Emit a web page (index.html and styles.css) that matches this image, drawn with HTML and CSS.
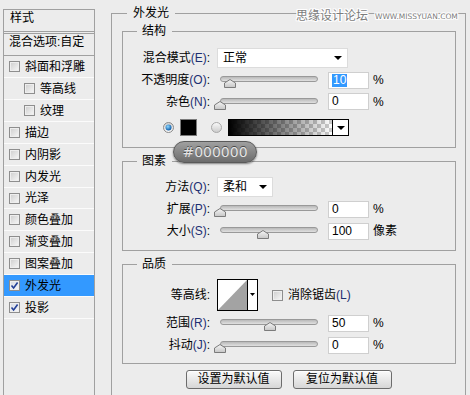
FILE: index.html
```html
<!DOCTYPE html>
<html lang="zh-CN">
<head>
<meta charset="utf-8">
<title>外发光</title>
<link rel="stylesheet" href="styles.css">
</head>
<body>
<svg class="defs" width="0" height="0" aria-hidden="true">
  <defs>
    <linearGradient id="tg" x1="0" y1="0" x2="0" y2="1"><stop offset="0" stop-color="#f6f6f6"/><stop offset="1" stop-color="#c6c6c6"/></linearGradient>
    <linearGradient id="rg" x1="0" y1="0" x2="0" y2="1"><stop offset="0" stop-color="#cfcfcf"/><stop offset="1" stop-color="#fbfbfb"/></linearGradient>
    <linearGradient id="rg2" x1="0" y1="0" x2="0" y2="1"><stop offset="0" stop-color="#fafafa"/><stop offset="1" stop-color="#cacaca"/></linearGradient>
    <radialGradient id="rb" cx="40%" cy="35%" r="65%"><stop offset="0" stop-color="#8fd8ff"/><stop offset="1" stop-color="#0a5aa8"/></radialGradient>
  </defs>
</svg>
<div class="dialog">
  <aside class="styles-panel">
    <div class="phead">样式</div>
    <div class="blend">混合选项:自定</div>
    <ul class="items">
      <li class="item"><span class="cb"></span>斜面和浮雕</li>
      <li class="item sub"><span class="cb"></span>等高线</li>
      <li class="item sub"><span class="cb"></span>纹理</li>
      <li class="item"><span class="cb"></span>描边</li>
      <li class="item"><span class="cb"></span>内阴影</li>
      <li class="item"><span class="cb"></span>内发光</li>
      <li class="item short"><span class="cb"></span>光泽</li>
      <li class="item"><span class="cb"></span>颜色叠加</li>
      <li class="item"><span class="cb"></span>渐变叠加</li>
      <li class="item"><span class="cb"></span>图案叠加</li>
      <li class="item sel"><span class="cb on"><svg width="9" height="9" viewBox="0 0 9 9"><path d="M1.5 4.5 L3.6 7 L7.6 1.5" fill="none" stroke="#223f96" stroke-width="1.6"/></svg></span>外发光</li>
      <li class="item"><span class="cb on"><svg width="9" height="9" viewBox="0 0 9 9"><path d="M1.5 4.5 L3.6 7 L7.6 1.5" fill="none" stroke="#223f96" stroke-width="1.6"/></svg></span>投影</li>
    </ul>
  </aside>

  <main class="group outer">
    <div class="legend lg-outer">外发光</div>

    <section class="group inner s1">
      <div class="legend lg-inner">结构</div>
      <div class="row r-first">
        <span class="lbl">混合模式<span class="k">(E)</span>:</span>
        <div class="select sel-blend"><span>正常</span><i class="arrow"></i></div>
      </div>
      <div class="row">
        <span class="lbl">不透明度<span class="k">(O)</span>:</span>
        <div class="slider"><div class="track"></div><svg class="thumb" style="left:7px" width="12" height="9" viewBox="0 0 12 9"><path d="M6 0.5 L11.5 4 V8.5 H0.5 V4 Z" fill="url(#tg)" stroke="#7b7b7b"/></svg></div>
        <div class="num"><span class="hl">10</span></div><span class="unit">%</span>
      </div>
      <div class="row h21">
        <span class="lbl">杂色<span class="k">(N)</span>:</span>
        <div class="slider"><div class="track"></div><svg class="thumb" style="left:-3px" width="12" height="9" viewBox="0 0 12 9"><path d="M6 0.5 L11.5 4 V8.5 H0.5 V4 Z" fill="url(#tg)" stroke="#7b7b7b"/></svg></div>
        <div class="num">0</div><span class="unit">%</span>
      </div>
      <div class="row h21 colorrow">
        <svg class="radio" width="11" height="11" viewBox="0 0 11 11"><circle cx="5.5" cy="5.5" r="5" fill="url(#rg)" stroke="#8a8a8a"/><circle cx="5.5" cy="5.5" r="3" fill="url(#rb)"/></svg>
        <div class="swatch"></div>
        <svg class="radio r2" width="11" height="11" viewBox="0 0 11 11"><circle cx="5.5" cy="5.5" r="5" fill="url(#rg2)" stroke="#a8a8a8"/></svg>
        <div class="gradient"><div class="gfill"></div><div class="garrow"><i class="arrow"></i></div></div>
      </div>
    </section>

    <section class="group inner s2">
      <div class="legend lg-inner">图素</div>
      <div class="row r-first">
        <span class="lbl">方法<span class="k">(Q)</span>:</span>
        <div class="select sel-method"><span>柔和</span><i class="arrow"></i></div>
      </div>
      <div class="row">
        <span class="lbl">扩展<span class="k">(P)</span>:</span>
        <div class="slider"><div class="track"></div><svg class="thumb" style="left:-3px" width="12" height="9" viewBox="0 0 12 9"><path d="M6 0.5 L11.5 4 V8.5 H0.5 V4 Z" fill="url(#tg)" stroke="#7b7b7b"/></svg></div>
        <div class="num">0</div><span class="unit">%</span>
      </div>
      <div class="row">
        <span class="lbl">大小<span class="k">(S)</span>:</span>
        <div class="slider"><div class="track"></div><svg class="thumb" style="left:40px" width="12" height="9" viewBox="0 0 12 9"><path d="M6 0.5 L11.5 4 V8.5 H0.5 V4 Z" fill="url(#tg)" stroke="#7b7b7b"/></svg></div>
        <div class="num">100</div><span class="unit">像素</span>
      </div>
    </section>

    <section class="group inner s3">
      <div class="legend lg-inner">品质</div>
      <div class="row r-first contour-row">
        <span class="lbl">等高线:</span>
        <svg class="contour" width="41" height="32" viewBox="0 0 41 32"><rect x="0.5" y="0.5" width="40" height="31" fill="#fff" stroke="#000"/><polygon points="1,31 30,1 30,31" fill="#a3a3a3"/><line x1="30.5" y1="0" x2="30.5" y2="32" stroke="#000"/><polygon points="33,14 38,14 35.5,17" fill="#000"/></svg>
        <span class="cb aa"></span><span class="aa-lbl">消除锯齿<span class="k">(L)</span></span>
      </div>
      <div class="row r-range">
        <span class="lbl">范围<span class="k">(R)</span>:</span>
        <div class="slider"><div class="track"></div><svg class="thumb" style="left:47px" width="12" height="9" viewBox="0 0 12 9"><path d="M6 0.5 L11.5 4 V8.5 H0.5 V4 Z" fill="url(#tg)" stroke="#7b7b7b"/></svg></div>
        <div class="num">50</div><span class="unit">%</span>
      </div>
      <div class="row">
        <span class="lbl">抖动<span class="k">(J)</span>:</span>
        <div class="slider"><div class="track"></div><svg class="thumb" style="left:-3px" width="12" height="9" viewBox="0 0 12 9"><path d="M6 0.5 L11.5 4 V8.5 H0.5 V4 Z" fill="url(#tg)" stroke="#7b7b7b"/></svg></div>
        <div class="num">0</div><span class="unit">%</span>
      </div>
    </section>

    <div class="btns">
      <button class="btn b1">设置为默认值</button>
      <button class="btn b2">复位为默认值</button>
    </div>
  </main>
</div>

<div class="tooltip">#000000</div>
<div class="watermark">思缘设计论坛<span class="wm-en">WWW.MISSYUAN.COM</span></div>
</body>
</html>
```

FILE: styles.css
```css
* { box-sizing: border-box; }

html, body {
  margin: 0;
  padding: 0;
}

body {
  width: 470px;
  height: 395px;
  overflow: hidden;
  position: relative;
  background: #ececec;
  color: #000;
  font-family: "Liberation Sans", "Noto Sans CJK SC", sans-serif;
  font-size: 12px;
  line-height: 1;
}

.defs {
  position: absolute;
  width: 0;
  height: 0;
}

.dialog {
  display: flex;
  align-items: flex-start;
}

/* ---------- left styles list ---------- */
.styles-panel {
  margin: 9px 0 0 3px;
  width: 92px;
  height: 400px;
  border: 1px solid #a0a0a0;
  flex: none;
}

.phead {
  height: 24px;
  line-height: 17px;
  padding-left: 6px;
  border-bottom: 3px double #a0a0a0;
}

.blend {
  height: 22px;
  line-height: 17px;
  padding-left: 5px;
  border-bottom: 1px solid #a0a0a0;
}

.items {
  list-style: none;
  margin: 0;
  padding: 0;
}

.item {
  display: flex;
  align-items: center;
  height: 22px;
  padding-left: 5px;
  border-bottom: 1px solid #fbfbfb;
}

.item.short { height: 21px; }
.item.sub { padding-left: 20px; }
.item.sel { background: #3399ff; }

.cb {
  width: 11px;
  height: 11px;
  border: 1px solid #8e8e8e;
  background: linear-gradient(135deg, #cdcdcd, #f8f8f8);
  box-shadow: inset 0 0 0 1px #eeeeee;
  margin-right: 5px;
  flex: none;
  display: inline-flex;
  align-items: center;
  justify-content: center;
}

.cb.on {
  background: linear-gradient(135deg, #d4d8e2, #f8f8fb);
}

/* ---------- group boxes ---------- */
.group {
  border: 1px solid #a0a0a0;
}

.outer {
  margin: 13px 0 0 16px;
  width: 355px;
  height: 400px;
  flex: none;
}

.legend {
  height: 14px;
  line-height: 14px;
  margin-top: -8px;
  width: max-content;
  background: #ececec;
}

.lg-outer {
  margin-left: 15px;
  padding: 0 6px;
}

.lg-inner {
  margin-left: 14px;
  padding: 0 6px 0 5px;
}

.inner {
  margin: 0 9px 0 10px;
}

.s1 { margin-top: 11px; padding-bottom: 9px; }
.s2 { margin-top: 13px; padding-bottom: 8px; }
.s3 { margin-top: 13px; padding-bottom: 7px; }

.row {
  display: flex;
  align-items: center;
  height: 22px;
}

.row.h21 { height: 21px; }
.s1 .r-first { margin-top: 9px; }
.s2 .r-first, .s3 .r-first { margin-top: 8px; }
.colorrow { margin-top: 5px; padding-left: 40px; }
.contour-row { height: 32px; }
.r-range { margin-top: 1px; }

.lbl {
  width: 87px;
  margin-right: 7px;
  text-align: right;
  flex: none;
  white-space: nowrap;
}

.k { color: #1d2f72; }

/* select */
.select {
  height: 20px;
  background: #fff;
  border: 1px solid #dcdcdc;
  display: flex;
  align-items: center;
  padding-left: 5px;
  flex: none;
}

.sel-blend { width: 131px; }
.sel-method { width: 56px; }

.arrow {
  width: 0;
  height: 0;
  border-left: 4px solid transparent;
  border-right: 4px solid transparent;
  border-top: 4px solid #000;
}

.select .arrow {
  margin-left: auto;
  margin-right: 5px;
}

/* slider */
.slider {
  position: relative;
  width: 104px;
  height: 22px;
  margin-right: 7px;
  flex: none;
}

.track {
  position: absolute;
  left: 3px;
  top: 7px;
  width: 98px;
  height: 6px;
  border: 1px solid #999;
  border-radius: 3px;
  background: linear-gradient(#b9b9b9, #e0e0e0);
}

.thumb {
  position: absolute;
  top: 10px;
}

/* numeric input */
.num {
  width: 41px;
  height: 17px;
  border: 1px solid #cfcfcf;
  background: #fff;
  padding-left: 3px;
  line-height: 15px;
  flex: none;
}

.hl {
  background: #3399ff;
  color: #fff;
  padding: 0 1px;
  display: inline-block;
  line-height: 13px;
  margin-top: 1px;
}

.unit { margin-left: 4px; }

/* color row */
.radio { flex: none; }
.r2 { margin-left: 14px; }

.swatch {
  width: 17px;
  height: 17px;
  margin-left: 6px;
  background: #000;
  border: 1px solid #7a7a7a;
  flex: none;
}

.gradient {
  width: 121px;
  height: 17px;
  margin-left: 6px;
  border: 1px solid #000;
  display: flex;
  flex: none;
}

.gfill {
  flex: 1;
  background-image:
    linear-gradient(to right, #000, rgba(0, 0, 0, 0)),
    conic-gradient(#cccccc 25%, #ffffff 0 50%, #cccccc 0 75%, #ffffff 0);
  background-size: 100% 100%, 8px 8px;
}

.garrow {
  width: 16px;
  border-left: 1px solid #000;
  background: #fff;
  display: flex;
  align-items: center;
  justify-content: center;
}

/* contour */
.contour { flex: none; }
.cb.aa { margin-left: 14px; }

/* buttons */
.btns {
  display: flex;
  justify-content: center;
  gap: 11px;
  margin-top: 6px;
}

.btn {
  height: 19px;
  padding: 0;
  border: 1px solid #6c6c6c;
  border-radius: 3px;
  background: linear-gradient(#fafafa, #d6d6d6);
  box-shadow: inset 0 1px 0 #ffffff;
  font-family: "Liberation Sans", "Noto Sans CJK SC", sans-serif;
  font-size: 12px;
  color: #000;
  line-height: 17px;
}

.b1 { width: 96px; }
.b2 { width: 99px; }

/* overlays */
.tooltip {
  position: absolute;
  left: 173px;
  top: 141px;
  width: 84px;
  height: 22px;
  border-radius: 11px;
  border: 1px solid #5a5a5a;
  background: linear-gradient(#a0a0a0, #6c6c6c);
  box-shadow: 0 1px 2px rgba(0, 0, 0, 0.45);
  color: #e4e4e4;
  font-family: "DejaVu Sans", sans-serif;
  font-size: 14px;
  line-height: 20px;
  text-align: center;
  text-shadow: 0 -1px 0 #4a4a4a;
}

.watermark {
  position: absolute;
  left: 296px;
  top: 8px;
  color: #7c7c7c;
  font-family: "Noto Sans CJK SC", sans-serif;
  font-size: 12px;
  line-height: 14px;
  white-space: nowrap;
  text-shadow: 1px 0 0 #fff, -1px 0 0 #fff, 0 1px 0 #fff, 0 -1px 0 #fff, 1px 1px 0 #fff, -1px -1px 0 #fff, 1px -1px 0 #fff, -1px 1px 0 #fff;
}

.wm-en {
  margin-left: 7px;
  font-family: "DejaVu Sans", sans-serif;
  font-size: 7.5px;
  vertical-align: 1px;
}
```
